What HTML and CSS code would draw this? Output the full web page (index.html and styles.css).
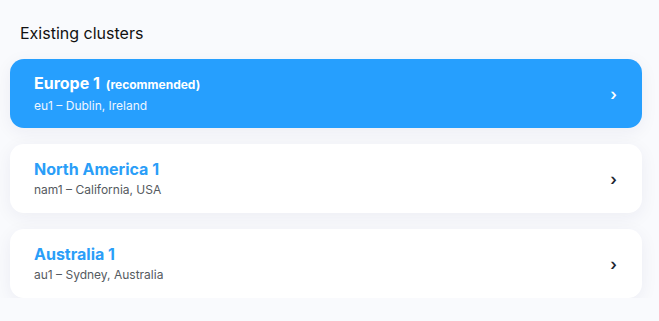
FILE: index.html
```html
<!DOCTYPE html>
<html>
<head>
<meta charset="utf-8">
<link rel="stylesheet" href="styles.css">
</head>
<body>
<div class="page">
  <h2 class="heading">Existing clusters</h2>
  <div class="list">
    <a class="card card--active">
      <div class="card__text">
        <div class="card__title">Europe 1 <span class="card__tag">(recommended)</span></div>
        <div class="card__sub">eu1 – Dublin, Ireland</div>
      </div>
      <span class="card__chev">›</span>
    </a>
    <a class="card">
      <div class="card__text">
        <div class="card__title">North America 1</div>
        <div class="card__sub">nam1 – California, USA</div>
      </div>
      <span class="card__chev">›</span>
    </a>
    <a class="card">
      <div class="card__text">
        <div class="card__title">Australia 1</div>
        <div class="card__sub">au1 – Sydney, Australia</div>
      </div>
      <span class="card__chev">›</span>
    </a>
  </div>
</div>
</body>
</html>
```
FILE: styles.css
```css
html, body {
  margin: 0;
  padding: 0;
  background: #f9fafd;
  font-family: Inter, "Noto Sans", sans-serif;
}
.page {
  padding: 23px 17px 0 10px;
}
.heading {
  margin: 0 0 15px 10px;
  font-size: 16px;
  font-weight: 400;
  line-height: 21px;
  color: #111;
}
.list {
  display: flex;
  flex-direction: column;
  gap: 16px;
}
.card {
  display: flex;
  align-items: center;
  justify-content: space-between;
  height: 69px;
  box-sizing: border-box;
  padding: 0 24px;
  background: #fff;
  border-radius: 14px;
  box-shadow: 0 4px 18px rgba(30, 40, 90, 0.06);
}
.card--active {
  background: #269ffe;
}
.card__title {
  font-size: 16px;
  font-weight: 700;
  line-height: 20px;
  color: #2a9ef8;
}
.card__tag {
  margin-left: 2px;
  font-size: 12px;
  font-weight: 700;
}
.card__sub {
  margin-top: 3px;
  font-size: 12px;
  line-height: 16px;
  color: #555a60;
}
.card--active .card__title {
  color: #fff;
}
.card--active .card__sub {
  color: #eef6ff;
}
.card__chev {
  margin-right: 1px;
  font-size: 16px;
  font-weight: 600;
  color: #1c2530;
  line-height: 1;
}
.card--active .card__chev {
  color: #fff;
}
```
